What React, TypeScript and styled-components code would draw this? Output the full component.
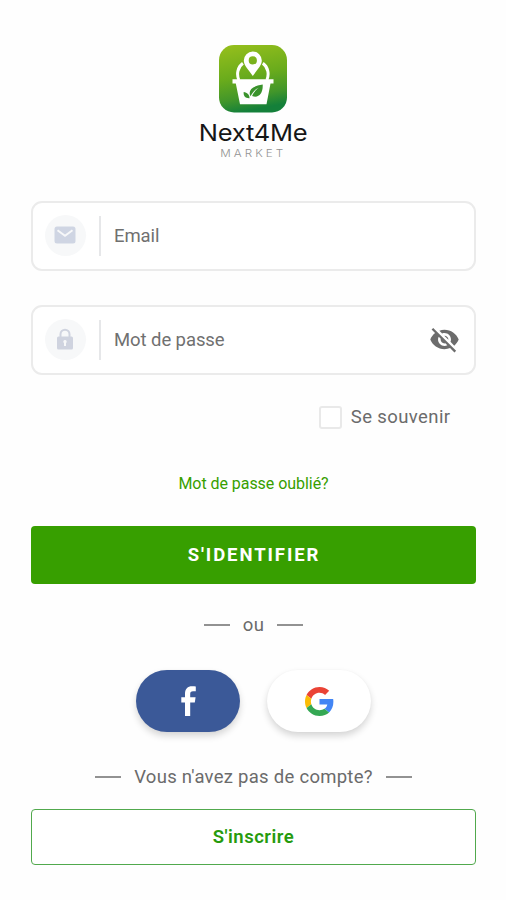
import React from 'react';
import styled, { createGlobalStyle } from 'styled-components';

const GlobalStyle = createGlobalStyle`
  *, *::before, *::after { box-sizing: border-box; }
  body { margin: 0; background: #fefefe; }
  button, input { font: inherit; }
`;

const GREEN = '#379f00';

const Page = styled.main`
  width: 506px;
  height: 900px;
  padding: 45px 30px 0 31px;
  display: flex;
  flex-direction: column;
  overflow: hidden;
  background: #fefefe;
  color: #6b6b6b;
  font-family: Roboto, 'Liberation Sans', sans-serif;
`;

const Brand = styled.header`
  height: 156px;
  display: flex;
  flex-direction: column;
  align-items: center;
  margin-right: 1px;
  svg { display: block; flex: none; }
`;

const BrandName = styled.h1`
  margin: 5px 0 0;
  font: 400 23.5px/30px Inter, sans-serif;
  letter-spacing: -0.2px;
  color: #161616;
  white-space: nowrap;
  transform: scaleX(1.085);
`;

const BrandTag = styled.span`
  font: 300 10px/11px Inter, sans-serif;
  letter-spacing: 2.6px;
  color: #929292;
  transform: scaleX(1.17);
`;

const Field = styled.label<{ $gap: number }>`
  flex: none;
  height: 70px;
  margin-bottom: ${(p) => p.$gap}px;
  padding: 0 14px 1px 12px;
  display: flex;
  align-items: center;
  border: 2px solid #ebebeb;
  border-radius: 11px;
  background: #fff;
`;

const FieldIcon = styled.span`
  width: 41px;
  height: 41px;
  flex: none;
  display: flex;
  align-items: center;
  justify-content: center;
  padding: 0 2px 1px 0;
  border-radius: 50%;
  background: #f7f8f9;
`;

const Separator = styled.span`
  width: 2px;
  height: 40px;
  margin: 0 13px 0 13px;
  background: #e6e7e9;
`;

const Input = styled.input`
  flex: 1;
  min-width: 0;
  height: 40px;
  padding: 0;
  border: 0;
  outline: 0;
  background: transparent;
  font-size: 18.5px;
  letter-spacing: -0.08px;
  color: #6b6b6b;
  &::placeholder { color: #707070; opacity: 1; }
`;

const Remember = styled.label`
  height: 24px;
  margin-right: 25.5px;
  display: flex;
  align-items: center;
  justify-content: flex-end;
  gap: 9px;
  font-size: 18.5px;
  letter-spacing: 0.4px;
`;

const Checkbox = styled.input`
  appearance: none;
  width: 23px;
  height: 23px;
  margin: 0;
  border: 2px solid #e9e9e9;
  border-radius: 3px;
  background: #fff;
`;

const Forgot = styled.a`
  margin: 43px 0 0;
  height: 24px;
  text-align: center;
  font-size: 16px;
  line-height: 24px;
  letter-spacing: -0.05px;
  color: ${GREEN};
`;

const Button = styled.button<{ $primary?: boolean }>`
  flex: none;
  width: 445px;
  height: ${(p) => (p.$primary ? 58 : 56)}px;
  margin-top: ${(p) => (p.$primary ? 30 : 20)}px;
  padding: 0 0 ${(p) => (p.$primary ? 0 : 1)}px ${(p) => (p.$primary ? 1 : 0)}px;
  border: ${(p) => (p.$primary ? '0' : '1px solid #51a94d')};
  border-radius: 4px;
  background: ${(p) => (p.$primary ? GREEN : '#fff')};
  color: ${(p) => (p.$primary ? '#fff' : '#269b0d')};
  font-size: 18.5px;
  font-weight: ${(p) => (p.$primary ? 700 : 600)};
  letter-spacing: ${(p) => (p.$primary ? 1.92 : 0.5)}px;
`;

const Divider = styled.div<{ $top: number }>`
  height: 24px;
  margin-top: ${(p) => p.$top}px;
  display: flex;
  align-items: center;
  justify-content: center;
  gap: 13px;
  font-size: 18.5px;
  letter-spacing: 0.27px;
  white-space: nowrap;
  &::before, &::after {
    content: '';
    width: 26px;
    height: 2px;
    background: #929292;
  }
`;

const Socials = styled.div`
  height: 62px;
  margin-top: 33px;
  display: flex;
  justify-content: center;
  gap: 27px;
`;

const SocialButton = styled.button<{ $bg: string }>`
  width: 104px;
  height: 62px;
  padding: 0;
  border: 0;
  border-radius: 31px;
  display: flex;
  align-items: center;
  justify-content: center;
  background: ${(p) => p.$bg};
  box-shadow: 0 4px 7px rgba(0, 0, 0, 0.16), 0 0 2px rgba(0, 0, 0, 0.03);
`;

const BasketLogo = () => (
  <svg width="68" height="68" viewBox="0 0 68 68">
    <defs>
      <linearGradient id="basket" x1="0.1" y1="0" x2="0.3" y2="1">
        <stop offset="0" stopColor="#96bf1c" />
        <stop offset="0.5" stopColor="#69ab1c" />
        <stop offset="0.8" stopColor="#42962a" />
        <stop offset="1" stopColor="#14803a" />
      </linearGradient>
    </defs>
    <rect width="68" height="67.5" rx="15" fill="url(#basket)" />
    <path d="M19.800 35C17.300 29 18.700 22 23.900 18.300M47.900 35C50.400 29 49 22 43.800 18.300" fill="none" stroke="#fff" strokeWidth="3" />
    <path d="M33.800 6.500a9 9 0 0 0-9 9c0 5 4.200 8.500 9 15.500 4.800-7 9-10.500 9-15.500a9 9 0 0 0-9-9Zm0 4.800a4.100 4.100 0 1 1 0 8.200 4.100 4.100 0 0 1 0-8.200Z" fill="#fff" fillRule="evenodd" />
    <path d="M13.500 34.300h41v4.200h-3L47.500 59.300H21L16.800 38.500h-3.300Z" fill="#fff" />
    <path d="M31.600 51.300c-3-5.800 1.300-10.200 12.100-11.700.5 9.200-4.400 14.100-10.600 11.400 1.700-3.800 4-6.300 7-8.400-4 1.800-6.600 4.500-8.500 8.700Z" fill="#3a932c" />
    <path d="M30.500 53.200c-4.300.2-6.300-2.200-5.800-6.100 3.500.5 5.800 2.500 5.800 6.100Z" fill="#3a932c" />
  </svg>
);

const MailIcon = () => (
  <svg width="22" height="18" viewBox="0 0 22 18">
    <rect x="0.500" y="0.500" width="21" height="17" rx="2.500" fill="#cfd5e3" />
    <path d="M3.500 4.200 11 9.700l7.500-5.500" fill="none" stroke="#f7f8f9" strokeWidth="2" />
  </svg>
);

const LockIcon = () => (
  <svg width="18" height="22" viewBox="0 0 18 22">
    <path d="M4.500 9V6.200a4.500 4.500 0 0 1 9 0V9" fill="none" stroke="#cfd3df" strokeWidth="2" />
    <rect x="1" y="8.500" width="16" height="13" rx="1.500" fill="#cfd3df" />
    <path d="M9 12a1.700 1.700 0 0 1 1 3.100V18H8v-2.900A1.700 1.700 0 0 1 9 12Z" fill="#f7f8f9" />
  </svg>
);

const EyeOffIcon = () => (
  <svg width="31" height="31" viewBox="0 0 24 24" fill="#6c6c6c">
    <path d="M12 7c2.760 0 5 2.240 5 5 0 .650-.130 1.260-.360 1.830l2.920 2.920c1.510-1.260 2.700-2.890 3.430-4.750-1.730-4.390-6-7.500-11-7.500-1.400 0-2.740.250-3.980.700l2.160 2.160C10.740 7.130 11.350 7 12 7zM2 4.270l2.280 2.280.460.460C3.080 8.300 1.780 10.020 1 12c1.730 4.390 6 7.500 11 7.500 1.550 0 3.030-.300 4.380-.840l.420.420L19.730 22 21 20.730 3.270 3 2 4.270zM7.530 9.800l1.550 1.550c-.050.210-.080.430-.080.650 0 1.660 1.340 3 3 3 .220 0 .440-.030.650-.080l1.550 1.550c-.670.330-1.410.530-2.200.530-2.760 0-5-2.240-5-5 0-.790.200-1.530.530-2.200zm4.310-.780l3.150 3.150.020-.160c0-1.660-1.340-3-3-3l-.170.010z" />
  </svg>
);

const FacebookIcon = () => (
  <svg width="15" height="30" viewBox="0 0 15 30">
    <path d="M4 30V16.500H.300v-5.200H4V7.800C4 2.800 6.700.200 11 .200c1.500 0 2.900.1 3.800.2v4.900H12c-2.100 0-2.800 1-2.800 2.700v3.300h5.400l-.8 5.200H9.200V30Z" fill="#fff" />
  </svg>
);

const GoogleIcon = () => (
  <svg width="29" height="29" viewBox="0 0 48 48">
    <path fill="#EA4335" d="M24 9.500c3.540 0 6.710 1.220 9.210 3.600l6.850-6.850C35.900 2.380 30.470 0 24 0 14.620 0 6.510 5.380 2.560 13.220l7.980 6.190C12.430 13.720 17.740 9.500 24 9.500z" />
    <path fill="#4285F4" d="M46.980 24.550c0-1.570-.150-3.090-.380-4.550H24v9.020h12.940c-.580 2.960-2.260 5.480-4.780 7.180l7.730 6c4.510-4.180 7.090-10.360 7.090-17.650z" />
    <path fill="#FBBC05" d="M10.530 28.590c-.480-1.450-.760-2.990-.760-4.590s.270-3.140.760-4.590l-7.980-6.190C.920 16.460 0 20.120 0 24c0 3.880.920 7.540 2.560 10.780l7.970-6.190z" />
    <path fill="#34A853" d="M24 48c6.480 0 11.930-2.130 15.890-5.810l-7.730-6c-2.150 1.450-4.920 2.300-8.160 2.300-6.260 0-11.570-4.220-13.470-9.910l-7.980 6.190C6.510 42.620 14.620 48 24 48z" />
  </svg>
);

export default function App() {
  return (
    <>
      <GlobalStyle />
      <Page>
        <Brand>
          <BasketLogo />
          <BrandName>Next4Me</BrandName>
          <BrandTag>MARKET</BrandTag>
        </Brand>
        <Field $gap={34}>
          <FieldIcon><MailIcon /></FieldIcon>
          <Separator />
          <Input type="email" placeholder="Email" />
        </Field>
        <Field $gap={30}>
          <FieldIcon><LockIcon /></FieldIcon>
          <Separator />
          <Input type="password" placeholder="Mot de passe" />
          <EyeOffIcon />
        </Field>
        <Remember>
          <Checkbox type="checkbox" />
          Se souvenir
        </Remember>
        <Forgot>Mot de passe oublié?</Forgot>
        <Button $primary>S'IDENTIFIER</Button>
        <Divider $top={29}>ou</Divider>
        <Socials>
          <SocialButton $bg="#3b5998" aria-label="Facebook"><FacebookIcon /></SocialButton>
          <SocialButton $bg="#fff" aria-label="Google"><GoogleIcon /></SocialButton>
        </Socials>
        <Divider $top={33}>Vous n'avez pas de compte?</Divider>
        <Button>S'inscrire</Button>
      </Page>
    </>
  );
}
